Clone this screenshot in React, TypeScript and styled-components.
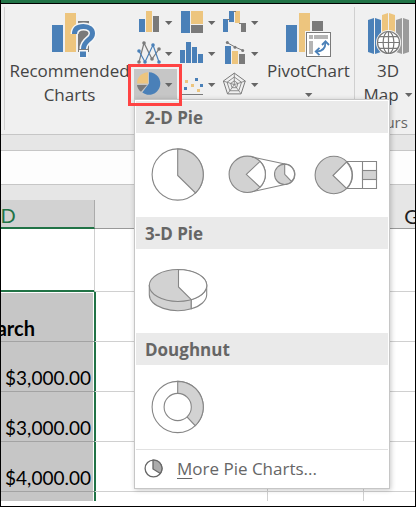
import React from "react";
import styled, { createGlobalStyle } from "styled-components";

const BLUE = "#4a80b8";
const TAN = "#edc57e";
const GRAY = "#7a7a7a";
const LINE = "#868686";
const FILL = "#d2d2d2";
const GREEN = "#217346";

const GlobalStyle = createGlobalStyle`
  * { box-sizing: border-box; }
  body { margin: 0; background: #fff; font-family: "Open Sans", "Noto Sans", sans-serif; }
  button { font: inherit; color: inherit; background: none; border: 0; padding: 0; margin: 0; }
  svg { display: block; flex: none; }
`;

const Window = styled.main`
  position: relative;
  border: 1px solid #000;
  border-top: 0;
  overflow: hidden;
`;

const TitleBar = styled.div`
  height: 4px;
  background: ${GREEN};
  border-bottom: 1px solid #000;
`;

const Ribbon = styled.section`
  display: flex;
  height: 131px;
  padding: 3px 0 4px 3px;
  background: #f0f0f0;
  border-bottom: 1px solid #c6c6c6;
`;

const Group = styled.div<{ $grow?: boolean }>`
  display: flex;
  flex: ${(p) => (p.$grow ? "1 0 auto" : "none")};
  flex-direction: ${(p) => (p.$grow ? "column" : "row")};
  align-items: flex-start;
  border-left: 1px solid #d0d0d0;
`;

const BigButton = styled.button<{ $width: number }>`
  display: flex;
  flex-direction: column;
  align-items: center;
  width: ${(p) => p.$width}px;
  padding-top: 6px;
  font-size: 17px;
  line-height: 24px;
  color: #444;
  white-space: nowrap;

  svg { margin-bottom: 1px; }
`;

const ButtonLine = styled.span`
  display: flex;
  align-items: center;
  gap: 6px;
  height: 24px;

  svg { margin: 0; }
`;

const GroupLabel = styled.div`
  width: 66px;
  margin-top: 5px;
  text-align: center;
  font-size: 15px;
  line-height: 20px;
  color: #666;
`;

const ChartGrid = styled.div`
  display: grid;
  grid-template-columns: repeat(3, 43px);
  grid-auto-rows: 31px;
`;

const ChartButton = styled.button<{ $active?: boolean }>`
  position: relative;
  display: flex;
  align-items: center;
  gap: 3px;
  padding-left: 2px;
  background: ${(p) => (p.$active ? "#c6c6c6" : "transparent")};
`;

const Callout = styled.span`
  position: absolute;
  z-index: 3;
  inset: -5px -5px -6px -6px;
  border: 3px solid #ff4343;
  pointer-events: none;
`;

const BarGap = styled.div`
  height: 15px;
  background: #e6e6e6;
`;

const FormulaBar = styled.div`
  height: 35px;
  background: #fdfdfd;
  border: solid #c6c6c6;
  border-width: 1px 0;
`;

const Sheet = styled.div`
  padding-bottom: 5px;
  overflow: hidden;
  background: #fff;
`;

const Grid = styled.table`
  table-layout: fixed;
  width: calc(100% + 124px);
  margin-left: -79px;
  border-collapse: separate;
  border-spacing: 0;
  font-family: Lato, "Open Sans", sans-serif;
  font-size: 19px;
  line-height: 24px;
  color: #000;
`;

const Col = styled.col<{ $width?: number }>`
  width: ${(p) => (p.$width ? `${p.$width}px` : "auto")};
`;

const GutterCell = styled.td`
  height: 15px;
  padding: 0;
  background: #e6e6e6;
`;

const ColumnHead = styled.th<{ $active?: boolean }>`
  height: 29px;
  padding: 3px 0 0;
  font-weight: 400;
  font-size: 20px;
  line-height: 22px;
  color: ${(p) => (p.$active ? GREEN : "#222")};
  background: ${(p) => (p.$active ? "#d2d2d2" : "#e6e6e6")};
  border-right: 1px solid ${(p) => (p.$active ? "#ababab" : "#e6e6e6")};
  border-bottom: ${(p) => (p.$active ? `2px solid ${GREEN}` : "1px solid #999")};
`;

const Cell = styled.td<{ $height: number; $aboveSelection?: boolean; $last?: boolean }>`
  height: ${(p) => p.$height}px;
  padding: 0;
  border-right: 1px solid #d0d0d0;
  border-bottom: ${(p) => (p.$last ? 0 : 1)}px solid ${(p) => (p.$aboveSelection ? GREEN : "#d0d0d0")};
  box-shadow: ${(p) => (p.$aboveSelection ? `inset 0 -1px ${GREEN}` : "none")};
`;

const SelectedCell = styled.td<{ $title?: boolean; $last?: boolean }>`
  height: ${(p) => (p.$last ? 9 : 50)}px;
  padding: ${(p) => (p.$last ? "0" : "0 3px 1px 0")};
  vertical-align: bottom;
  text-align: ${(p) => (p.$title ? "center" : "right")};
  font-size: ${(p) => (p.$title ? 20 : 19)}px;
  font-weight: ${(p) => (p.$title ? 700 : 400)};
  background: #c6c6c6;
  border-right: 1px solid ${GREEN};
  border-bottom: ${(p) => (p.$last ? 0 : 1)}px solid #a3a3a3;
  box-shadow: 1px 0 ${GREEN}, inset -1px ${(p) => (p.$title ? "1px" : "0")} #fff;
`;

const Menu = styled.div`
  position: absolute;
  z-index: 2;
  top: 99px;
  left: 133px;
  width: 256px;
  padding: 1px;
  background: #fff;
  border: 1px solid #c6c6c6;
  box-shadow: 1px 1px 5px rgba(0, 0, 0, 0.22);
`;

const MenuHeading = styled.h2`
  margin: 0;
  padding-left: 9px;
  height: 32px;
  font-size: 17px;
  font-weight: 700;
  line-height: 34px;
  color: #666;
  background: #eaeaea;
`;

const Gallery = styled.div`
  display: grid;
  grid-template-columns: repeat(3, 84px);
  height: 84px;
`;

const GalleryButton = styled.button`
  display: flex;
  align-items: center;
  justify-content: center;
`;

const MoreItem = styled.button`
  display: flex;
  align-items: center;
  gap: 14px;
  width: 100%;
  height: 38px;
  padding: 0 8px;
  border-top: 1px solid #e1e1e1;
  font-size: 17px;
  color: #666;
`;

const Mnemonic = styled.u`
  text-underline-offset: 3px;
  text-decoration-thickness: 1px;
`;

const Arrow = () => (
  <svg width="8" height="4" viewBox="0 0 8 4" aria-hidden="true">
    <path d="M0 0h7.4L3.7 4z" fill="#666" />
  </svg>
);

type Bar = [number, number, number, number, string];

const Bars = ({ bars }: { bars: Bar[] }) => (
  <>
    {bars.map(([x, y, w, h, c]) => (
      <rect key={`${x}-${y}`} x={x} y={y} width={w} height={h} fill={c} />
    ))}
  </>
);

const Dots = ({ points, fill }: { points: number[][]; fill: string }) => (
  <>
    {points.map(([x, y]) => (
      <circle key={`${x}-${y}`} cx={x} cy={y} r="1.8" fill={fill} />
    ))}
  </>
);

const pentagon = (r: number) =>
  [0, 1, 2, 3, 4]
    .map((i) => {
      const a = (i * 72 * Math.PI) / 180;
      return `${12.3 + r * Math.sin(a)},${12.6 - r * Math.cos(a)}`;
    })
    .join(" ");

const grayLine = [[3, 21], [8, 2], [16, 18], [23, 8]];
const blueLine = [[3, 10], [9, 21], [17, 4], [23, 21]];

const charts: { name: string; active?: boolean; art: React.ReactNode }[] = [
  { name: "Column chart", art: <Bars bars={[[3, 9, 6, 13, BLUE], [10, 1, 6, 21, TAN], [17, 6, 6, 16, GRAY]]} /> },
  { name: "Hierarchy chart", art: <Bars bars={[[2, 1, 9, 22, BLUE], [12, 1, 12, 13, TAN], [12, 15, 12, 8, GRAY]]} /> },
  {
    name: "Waterfall chart",
    art: (
      <>
        <Bars bars={[[1, 9, 5, 13, BLUE], [7, 1, 5, 11, BLUE], [13, 1, 5, 12, TAN], [19, 13, 5, 9, GRAY]]} />
        <path d="M5 9.5h3M11 1.5h3M17 13.5h3" stroke={GRAY} />
      </>
    ),
  },
  {
    name: "Line chart",
    art: (
      <>
        <polyline points={grayLine.join(" ")} fill="none" stroke={GRAY} strokeWidth="1.2" />
        <polyline points={blueLine.join(" ")} fill="none" stroke={BLUE} strokeWidth="1.2" />
        <Dots points={grayLine} fill={GRAY} />
        <Dots points={blueLine} fill={BLUE} />
      </>
    ),
  },
  {
    name: "Statistic chart",
    art: <Bars bars={[[1, 9, 5, 13, BLUE], [7, 1, 5, 21, BLUE], [13, 6, 5, 16, BLUE], [19, 13, 5, 9, BLUE]]} />,
  },
  {
    name: "Combo chart",
    art: (
      <>
        <Bars bars={[[3, 5, 6, 18, BLUE], [10, 10, 6, 13, TAN], [17, 13, 6, 10, GRAY]]} />
        <path d="M5 1.5L13 6l8 3.5" fill="none" stroke={GRAY} />
        <circle cx="5.3" cy="1.6" r="1.5" fill={GRAY} />
        <circle cx="13" cy="6.2" r="1.5" fill={GRAY} />
        <circle cx="20.7" cy="9.4" r="1.5" fill={GRAY} />
      </>
    ),
  },
  {
    name: "Pie chart",
    active: true,
    art: (
      <>
        <path d="M13 11.5V.2A11.3 11.3 0 1 1 6.3 20.6z" fill={BLUE} />
        <path d="M12 11.5V.2A11.3 11.3 0 0 0 1 11.5z" fill={TAN} />
        <path d="M11 13H1a10 10 0 0 0 4 6.8z" fill={GRAY} />
      </>
    ),
  },
  {
    name: "Scatter chart",
    art: (
      <>
        <Bars
          bars={[
            [6, 8, 3, 3, TAN], [16, 6, 3, 3, BLUE], [12, 12, 3, 3, TAN],
            [21, 12, 3, 3, BLUE], [5, 15, 3, 3, BLUE], [18, 17, 3, 3, TAN],
          ]}
        />
        <path d="M3 22.5h21" stroke={GRAY} />
      </>
    ),
  },
  {
    name: "Radar chart",
    art: (
      <g fill="none" stroke={GRAY}>
        <polygon points={pentagon(11.5)} />
        <polygon points={pentagon(7.6)} stroke="#8e8e8e" />
        <polygon points={pentagon(3.8)} stroke="#8e8e8e" />
        <path d="M12.3 12.6V1M12.3 12.6l11-3.6M12.3 12.6l6.8 9.3M12.3 12.6L5.5 22M12.3 12.6l-11-3.6" strokeWidth="0.8" />
      </g>
    ),
  },
];

const QUESTION = "M22.5 21C22.5 15.5 26.5 13.5 31.5 13.5C37 13.5 40.5 16.5 40.5 20.5C40.5 27.5 31.5 26.5 31.5 36";

const RecommendedIcon = () => (
  <svg width="55" height="45" viewBox="-10 0 55 45" aria-hidden="true">
    <Bars bars={[[0, 12, 11, 27, BLUE], [13, 0, 11, 39, TAN], [26, 8, 11, 31, GRAY]]} />
    <path d={QUESTION} fill="none" stroke="#f7f7f7" strokeWidth="8" />
    <rect x="27" y="37" width="9" height="8" fill="#f7f7f7" />
    <path d={QUESTION} fill="none" stroke={BLUE} strokeWidth="5" />
    <rect x="28" y="38.5" width="6" height="5.5" fill={BLUE} />
  </svg>
);

const PivotIcon = () => (
  <svg width="45" height="45" viewBox="0 0 45 45" aria-hidden="true">
    <Bars bars={[[0, 12, 11, 27, BLUE], [13, 0, 11, 39, TAN], [26, 8, 11, 31, GRAY]]} />
    <rect x="19" y="18" width="26" height="27" fill="#f4f4f4" />
    <rect x="20.5" y="19.5" width="24" height="24" fill="#fff" stroke={GRAY} />
    <Bars bars={[[23, 22, 4, 4, "#b5b5b5"], [28, 22, 14, 4, "#b5b5b5"], [23, 28, 4, 13, "#b5b5b5"]]} />
    <g fill="none" stroke={BLUE} strokeWidth="1.8">
      <path d="M30.5 38.5C36.5 38.5 39.5 35 39.5 29" />
      <path d="M36 32l3.5-3.6L43 32M33.5 34.8L29.7 38.5l3.8 3.7" />
    </g>
  </svg>
);

const MapIcon = () => (
  <svg width="41" height="45" viewBox="0 1 41 45" aria-hidden="true">
    <path d="M0 8l6-2v36l-6-2zM7 6l6 2v32l-6 2z" fill={BLUE} />
    <path d="M14 3l6-2v34l-6 4zM21 1l6 2v36l-6-4z" fill={TAN} />
    <path d="M28 8l6-2v36l-6-2zM35 6l6 2v32l-6 2z" fill="#9b9b9b" />
    <circle cx="20.5" cy="30.5" r="12.5" fill="#f4f4f4" />
    <g fill="#fff" stroke={GRAY} strokeWidth="1.2">
      <circle cx="20.5" cy="30.5" r="11" />
      <ellipse cx="20.5" cy="30.5" rx="5.4" ry="11" />
      <path d="M20.5 19.5v22M9.5 30.5h22M11.5 24.6h18M11.5 36.4h18" />
    </g>
  </svg>
);

const GalleryIcon = ({ children }: { children: React.ReactNode }) => (
  <svg width="68" height="60" viewBox="0 0 68 60" fill="none" stroke={LINE} strokeWidth="1.1" aria-hidden="true">
    {children}
  </svg>
);

const rows = ["March", "$3,000.00", "$3,000.00", "$4,000.00"];

export default function App() {
  return (
    <Window>
      <GlobalStyle />
      <TitleBar />
      <Ribbon>
        <Group>
          <BigButton $width={129}>
            <RecommendedIcon />
            <ButtonLine>Recommended</ButtonLine>
            <ButtonLine>Charts</ButtonLine>
          </BigButton>
          <ChartGrid>
            {charts.map((c) => (
              <ChartButton key={c.name} aria-label={c.name} $active={c.active}>
                <svg width="26" height="25" viewBox="0 0 26 25" aria-hidden="true">
                  {c.art}
                </svg>
                <Arrow />
                {c.active && <Callout />}
              </ChartButton>
            ))}
          </ChartGrid>
          <BigButton $width={91}>
            <PivotIcon />
            <ButtonLine>PivotChart</ButtonLine>
            <ButtonLine>
              <Arrow />
            </ButtonLine>
          </BigButton>
        </Group>
        <Group $grow>
          <BigButton $width={66}>
            <MapIcon />
            <ButtonLine>3D</ButtonLine>
            <ButtonLine>
              Map <Arrow />
            </ButtonLine>
          </BigButton>
          <GroupLabel>Tours</GroupLabel>
        </Group>
      </Ribbon>
      <BarGap />
      <FormulaBar />
      <Sheet>
        <Grid>
          <colgroup>
            <Col $width={173} />
            <Col $width={173} />
            <Col $width={96} />
            <Col />
          </colgroup>
          <thead>
            <tr>
              <GutterCell colSpan={4} />
            </tr>
            <tr>
              <ColumnHead $active>D</ColumnHead>
              <ColumnHead />
              <ColumnHead />
              <ColumnHead>G</ColumnHead>
            </tr>
          </thead>
          <tbody>
            <tr>
              <Cell $height={63} $aboveSelection />
              <Cell $height={63} />
              <Cell $height={63} />
              <Cell $height={63} />
            </tr>
            {rows.map((text, i) => (
              <tr key={i}>
                <SelectedCell $title={i === 0}>{text}</SelectedCell>
                <Cell $height={50} />
                <Cell $height={50} />
                <Cell $height={50} />
              </tr>
            ))}
            <tr>
              <SelectedCell $last />
              <Cell $height={9} $last />
              <Cell $height={9} $last />
              <Cell $height={9} $last />
            </tr>
          </tbody>
        </Grid>
      </Sheet>

      <Menu>
        <MenuHeading>2-D Pie</MenuHeading>
        <Gallery>
          <GalleryButton aria-label="Pie">
            <GalleryIcon>
              <circle cx="33.7" cy="29.5" r="25.6" />
              <path d="M33.7 30.5V4A25.6 25.6 0 0 1 51.5 48z" fill={FILL} />
            </GalleryIcon>
          </GalleryButton>
          <GalleryButton aria-label="Pie of Pie">
            <GalleryIcon>
              <circle cx="19.3" cy="29.3" r="18.2" fill={FILL} />
              <path d="M18.3 29.3L32 16.4A18.2 18.2 0 0 1 32 42.2z" fill="#fff" />
              <circle cx="56.7" cy="29.3" r="10.2" fill={FILL} />
              <path d="M56.7 29.3V19.1A10.2 10.2 0 0 1 63.5 36.5z" fill="#fff" />
              <path d="M24 12l33 7M24 46.7l33-7.2" />
            </GalleryIcon>
          </GalleryButton>
          <GalleryButton aria-label="Bar of Pie">
            <GalleryIcon>
              <circle cx="21.8" cy="30" r="18.7" fill={FILL} />
              <path d="M21 30.5L34.5 17A18.7 18.7 0 0 1 34.5 43.5z" fill="#fff" />
              <path d="M34.5 16.5h30v27h-30M50.5 16.5v27" />
              <rect x="50.5" y="25.5" width="14" height="9" fill={FILL} />
            </GalleryIcon>
          </GalleryButton>
        </Gallery>
        <MenuHeading>3-D Pie</MenuHeading>
        <Gallery>
          <GalleryButton aria-label="3-D Pie">
            <GalleryIcon>
              <path d="M5.3 24.5v9.3A28.7 16 0 0 0 47.3 47.8V38.5z" fill={FILL} />
              <path d="M62.7 24.5v9.3A28.7 16 0 0 1 47.3 47.8V38.5z" fill="#fff" />
              <ellipse cx="34" cy="24.5" rx="28.7" ry="16" fill={FILL} />
              <path d="M34.5 26V8.5A28.7 16 0 0 1 47.3 38.7z" fill="#fff" />
            </GalleryIcon>
          </GalleryButton>
        </Gallery>
        <MenuHeading>Doughnut</MenuHeading>
        <Gallery>
          <GalleryButton aria-label="Doughnut">
            <GalleryIcon>
              <circle cx="33.7" cy="30" r="25.6" />
              <path d="M33.7 30V4.4A25.6 25.6 0 0 1 51.2 48.7z" fill={FILL} />
              <circle cx="33.7" cy="30" r="13.6" fill="#fff" />
            </GalleryIcon>
          </GalleryButton>
        </Gallery>
        <MoreItem>
          <svg width="19" height="19" viewBox="0 0 19 19" fill="none" stroke="#666" strokeWidth="1.3" aria-hidden="true">
            <circle cx="9.5" cy="9.5" r="8.4" />
            <path d="M9 10V1.1A8.4 8.4 0 0 1 16.3 14.5z" fill="#ababab" />
          </svg>
          <span>
            <Mnemonic>M</Mnemonic>ore Pie Charts...
          </span>
        </MoreItem>
      </Menu>
    </Window>
  );
}
